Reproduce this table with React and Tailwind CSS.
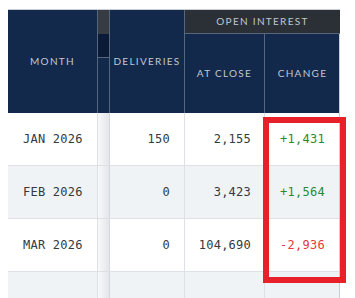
import React from "react";

const rows = [
  { month: "JAN 2026", deliveries: "150", close: "2,155", change: "+1,431", up: true },
  { month: "FEB 2026", deliveries: "0", close: "3,423", change: "+1,564", up: true },
  { month: "MAR 2026", deliveries: "0", close: "104,690", change: "-2,936", up: false },
  { month: "", deliveries: "", close: "", change: "", up: true },
];

const head = "font-['Lato','Noto_Sans',sans-serif] text-[10px] tracking-[0.13em] text-[#c0c7d1] uppercase";
const mono = "font-['DejaVu_Sans_Mono','Liberation_Mono',monospace] text-[12px] tracking-[0.02em]";

export default function App() {
  return (
    <div className="w-[355px] h-[298px] overflow-hidden bg-white pt-[9px] pl-2">
      <div className="relative w-[332px] border-t border-r border-[#c9ced6]">
        {/* Header */}
        <div className="grid grid-cols-[90px_12px_75px_80px_75px] grid-rows-[24px_79px] bg-[#13294b]">
          <div className={`row-span-2 flex items-center justify-center border-r border-[#56667f] ${head}`}>
            Month
          </div>
          <div className="row-span-2 flex flex-col border-r border-[#56667f]">
            <div className="h-[24px] bg-[#363c42]" />
            <div className="h-[24px] bg-[#0a1a37] border-b border-[#56667f]" />
            <div className="flex-1" />
          </div>
          <div className={`row-span-2 flex items-center justify-center border-r border-[#56667f] ${head} tracking-[0.1em]`}>
            Deliveries
          </div>
          <div className={`col-span-2 flex items-center justify-center bg-[#2a3036] border-b border-[#56667f] ${head}`}>
            Open Interest
          </div>
          <div className={`flex items-center justify-center border-r border-[#56667f] ${head}`}>
            At Close
          </div>
          <div className={`flex items-center justify-center ${head}`}>Change</div>
        </div>

        {/* Body */}
        {rows.map((r, i) => (
          <div
            key={i}
            className={`grid grid-cols-[90px_12px_75px_80px_75px] h-[53px] border-b border-[#dde1e6] ${
              i % 2 === 1 ? "bg-[#f0f3f6]" : "bg-white"
            }`}
          >
            <div className={`flex items-center pl-[15px] border-r border-[#dde1e6] text-[#333a40] ${mono}`}>{r.month}</div>
            <div className="border-r border-[#d5d9de] bg-gradient-to-r from-[#f8f9fa] to-[#e3e6ea]" />
            <div className={`flex items-center justify-end pr-[14px] border-r border-[#dde1e6] text-[#333a40] ${mono}`}>
              {r.deliveries}
            </div>
            <div className={`flex items-center justify-end pr-[13px] border-r border-[#dde1e6] text-[#333a40] ${mono}`}>
              {r.close}
            </div>
            <div
              className={`flex items-center justify-center ${mono} ${
                r.up ? "text-[#2b8a2e]" : "text-[#e5393b]"
              }`}
            >
              {r.change}
            </div>
          </div>
        ))}

        {/* Annotation box */}
        <div className="absolute left-[255px] top-[107px] w-[83px] h-[166px] border-[6px] border-[#e8202a]" />
      </div>
    </div>
  );
}
